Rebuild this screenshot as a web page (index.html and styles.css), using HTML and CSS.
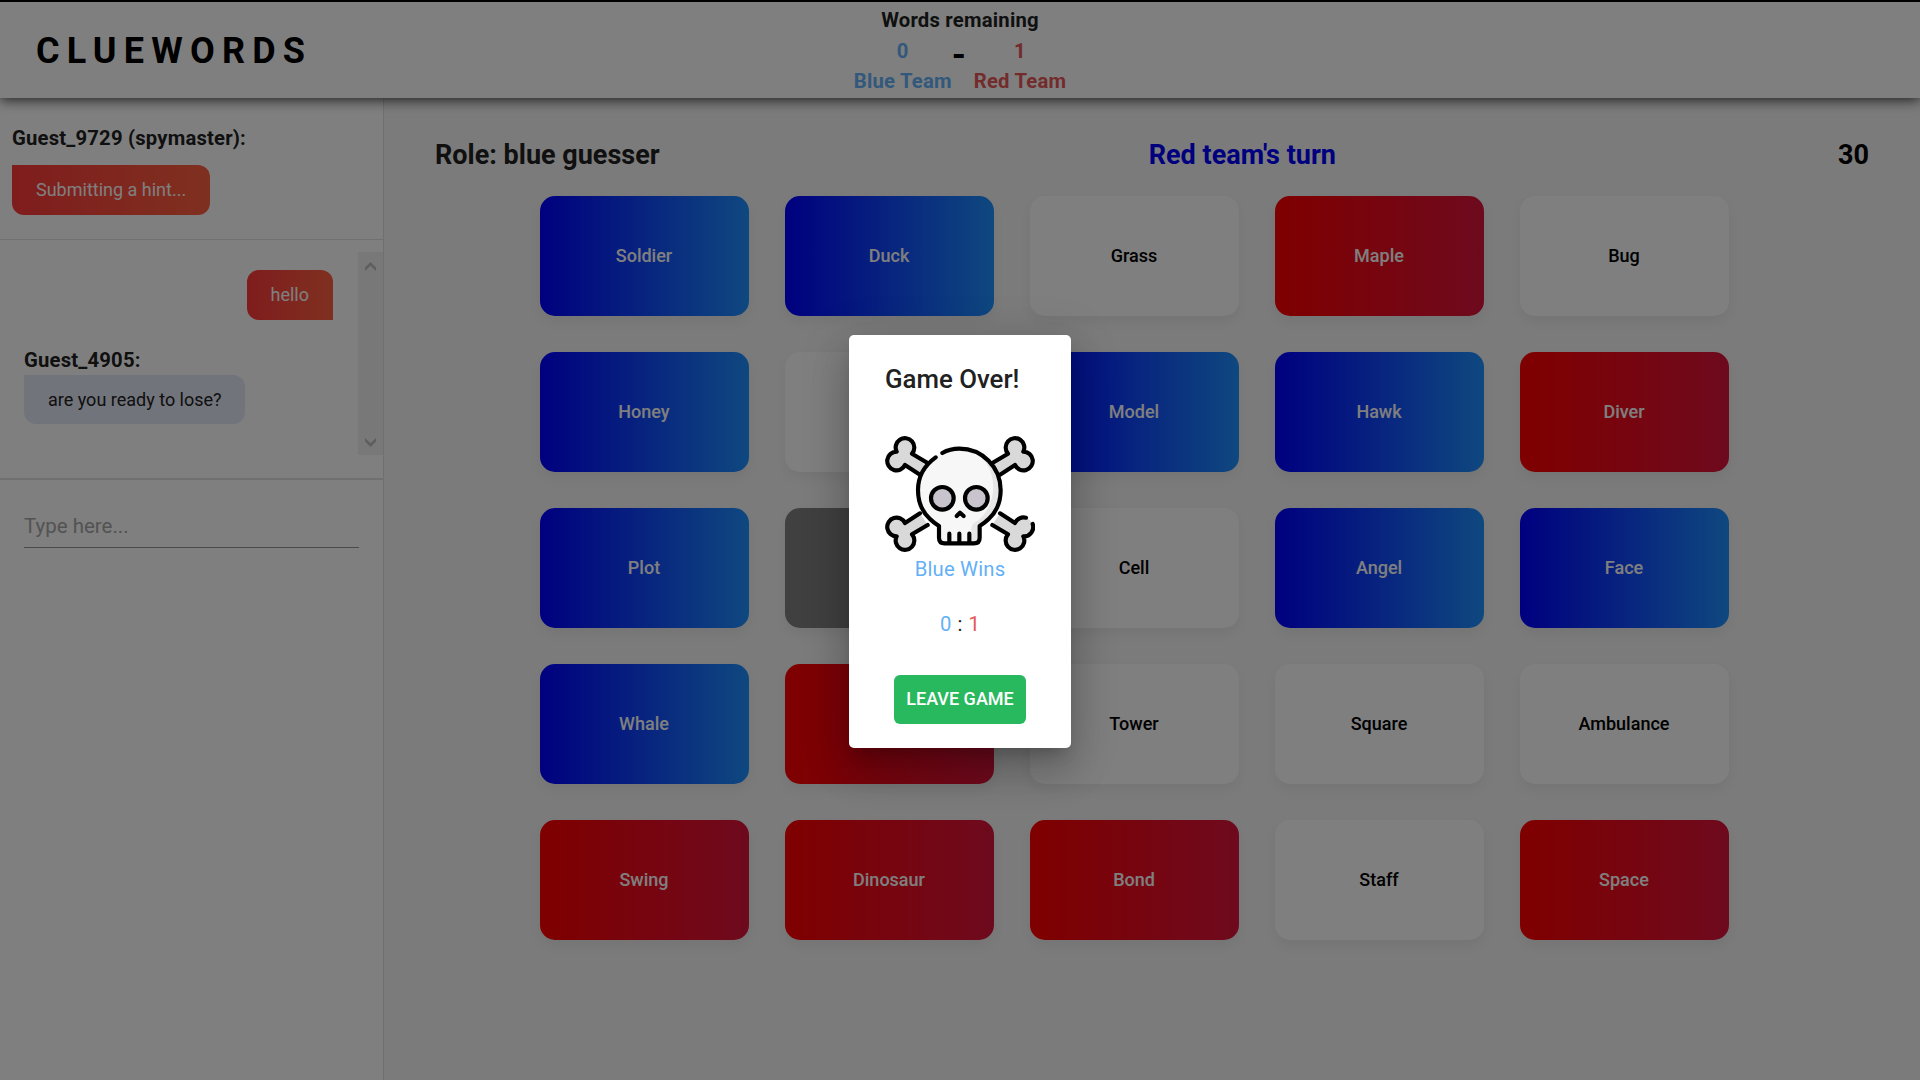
FILE: index.html
```html
<!DOCTYPE html>
<html lang="en">
<head>
<meta charset="utf-8">
<title>Cluewords</title>
<link rel="stylesheet" href="styles.css">
</head>
<body>
<header class="header">
  <h1 class="logo">CLUEWORDS</h1>
  <div class="score">
    <div class="score-title">Words remaining</div>
    <div class="score-row">
      <div class="team blue-text"><span>0</span><span>Blue Team</span></div>
      <div class="dash">-</div>
      <div class="team red-text"><span>1</span><span>Red Team</span></div>
    </div>
  </div>
  <div></div>
</header>
<div class="layout">
  <aside class="sidebar">
    <section class="hint">
      <div class="author">Guest_9729 (spymaster):</div>
      <div class="bubble warm hint-bubble">Submitting a hint...</div>
    </section>
    <section class="chat">
      <div class="messages">
        <div class="bubble warm mine">hello</div>
        <div class="author theirs-name">Guest_4905:</div>
        <div class="bubble theirs">are you ready to lose?</div>
      </div>
      <div class="scrollbar">
        <svg width="11" height="9" viewBox="0 0 11 9"><path d="M0 5.500 5.500 0 11 5.500V9L5.500 3.800 0 9z"/></svg>
        <svg width="11" height="9" viewBox="0 0 11 9"><path d="M0 3.500 5.500 9 11 3.500V0L5.500 5.200 0 0z"/></svg>
      </div>
    </section>
    <section class="compose"><div class="field">Type here...</div></section>
  </aside>
  <main class="main">
    <div class="status">
      <div class="role">Role: blue guesser</div>
      <div class="turn">Red team's turn</div>
      <div class="timer">30</div>
    </div>
    <div class="board">
      <div class="card blue">Soldier</div><div class="card blue">Duck</div><div class="card">Grass</div><div class="card red">Maple</div><div class="card">Bug</div>
      <div class="card blue">Honey</div><div class="card"></div><div class="card blue">Model</div><div class="card blue">Hawk</div><div class="card red">Diver</div>
      <div class="card blue">Plot</div><div class="card assassin"></div><div class="card">Cell</div><div class="card blue">Angel</div><div class="card blue">Face</div>
      <div class="card blue">Whale</div><div class="card red"></div><div class="card">Tower</div><div class="card">Square</div><div class="card">Ambulance</div>
      <div class="card red">Swing</div><div class="card red">Dinosaur</div><div class="card red">Bond</div><div class="card">Staff</div><div class="card red">Space</div>
    </div>
  </main>
</div>
<div class="overlay">
  <div class="dialog">
    <h2 class="dialog-title">Game Over!</h2>
    <svg class="skull" viewBox="135 333 450 348" fill="none" stroke="#000" stroke-width="12.500" stroke-linecap="round" stroke-linejoin="round">
      <g fill="#d9d9d9">
        <path d="M263 414 216 386A28 28 0 1 0 170 380A28 28 0 1 0 195 420L240 449"/>
        <path d="M457 414 504 386A28 28 0 1 1 550 380A28 28 0 1 1 525 420L480 449"/>
        <path d="M263 600 216 628A28 28 0 1 1 170 634A28 28 0 1 1 195 594L240 565"/>
        <path stroke="none" d="M457 600 504 628A28 28 0 1 0 550 634A28 28 0 1 0 525 594L480 565"/>
      </g>
      <path d="M457 600 504 628A28 28 0 1 0 550 634A28 28 0 0 0 578 597M558 578A28 28 0 0 0 525 594L480 565"/>
      <path fill="#f7f7f7" stroke="none" d="M358 371A124 124 0 0 0 234 495Q234 549 270 582L297 603V638Q297 655 314 655H402Q419 655 419 638V603L446 582Q482 549 482 495A124 124 0 0 0 358 371Z"/>
      <path fill="#e6e6e6" stroke="none" d="M385 375C478 405 486 545 400 596Q394 601 394 612V655H402Q419 655 419 638V603L446 582Q482 549 482 495A124 124 0 0 0 385 375Z"/>
      <path d="M287 397Q234 435 234 495Q234 549 270 582Q280 592 297 603V638Q297 655 314 655H402Q419 655 419 638V603Q436 592 446 582Q482 549 482 495A124 124 0 0 0 358 371Q330 371 307 384"/>
      <path d="M328 626V653M358 626V653M388 626V653"/>
      <circle cx="307" cy="520" r="34" fill="#c8c3cc"/>
      <circle cx="409" cy="520" r="34" fill="#c8c3cc"/>
      <path d="M350 573 360 563 371 573"/>
    </svg>
    <p class="winner blue-text">Blue Wins</p>
    <p class="result"><span class="blue-text">0</span> : <span class="red-text">1</span></p>
    <button class="leave">LEAVE GAME</button>
  </div>
</div>
</body>
</html>
```

FILE: styles.css
```css
* { box-sizing: border-box; }
body {
  margin: 0;
  height: 1080px;
  overflow: hidden;
  display: flex;
  flex-direction: column;
  border-top: 2px solid #000;
  font-family: Roboto, "Liberation Sans", sans-serif;
  font-size: 18px;
  color: #212121;
  background: #fff;
}
.blue-text { color: #64b0f6; }
.red-text { color: #e65656; }

.header {
  flex: none;
  height: 96px;
  display: grid;
  grid-template-columns: 1fr auto 1fr;
  background: #fff;
  box-shadow: 0 2px 12px rgba(0, 0, 0, 0.75);
  z-index: 1;
}
.logo {
  margin: 0;
  padding: 2px 0 0 36px;
  align-self: center;
  font-size: 36px;
  line-height: 42px;
  letter-spacing: 7.2px;
  color: #000;
}
.score {
  padding-top: 3px;
  font-size: 20.25px;
  line-height: 30px;
  letter-spacing: 0.22px;
  font-weight: 700;
  text-align: center;
}
.score-row { display: flex; justify-content: center; padding-top: 1px; }
.team { display: flex; flex-direction: column; }
.dash { width: 22px; padding-right: 8px; font-size: 36px; line-height: 39px; color: #000; }

.layout { flex: 1; display: flex; min-height: 0; }
.sidebar { width: 384px; flex: none; border-right: 1px solid #e0e0e0; }
.author { font-size: 20.25px; line-height: 30px; letter-spacing: 0.19px; font-weight: 700; }
.bubble { width: fit-content; padding: 0 24px; font-size: 18px; line-height: 49px; border-radius: 12px; }
.warm { color: #fff; line-height: 50px; background: linear-gradient(90deg, #ff3a3a, #ff6040); }
.hint { height: 142px; padding: 25px 12px 0; border-bottom: 1px solid #e0e0e0; }
.hint-bubble { margin-top: 12px; border-top-left-radius: 0; }
.chat { height: 240px; padding-top: 12px; display: flex; border-bottom: 2px solid #e0e0e0; }
.messages { flex: 1; padding: 18px 25px 0 24px; }
.mine { margin-left: auto; border-bottom-right-radius: 0; }
.theirs-name { margin-top: 25px; }
.theirs { padding-right: 23px; border-top-left-radius: 0; background: #e3e8f7; }
.scrollbar {
  width: 25px;
  height: 203px;
  padding: 10px 0 8px;
  display: flex;
  flex-direction: column;
  align-items: center;
  justify-content: space-between;
  background: #f0f0f0;
  fill: #bdbdbd;
}
.compose { padding: 28px 24px 0; }
.field { height: 40px; font-size: 20.5px; line-height: 36px; color: #a6a6a6; border-bottom: 1px solid #949494; }

.main { flex: 1; background: #f6f6f6; padding: 40px 51px 0; }
.status { display: flex; justify-content: space-between; font-size: 27px; line-height: 34px; font-weight: 700; }
.turn { margin-right: 13px; color: #00f; }
.timer { color: #000; }
.board {
  display: grid;
  grid-template-columns: repeat(5, 209px);
  grid-auto-rows: 120px;
  gap: 36px;
  margin: 24px 0 0 105px;
}
.card {
  display: flex;
  align-items: center;
  justify-content: center;
  padding: 0 1px 2px 0;
  border-radius: 15px;
  background: #fff;
  color: #000;
  font-size: 18px;
  font-weight: 500;
  box-shadow: 0 6px 12px rgba(0, 0, 0, 0.05);
}
.blue { color: #fff; background: linear-gradient(90deg, #00f, #1e90ff); }
.red { color: #fff; background: linear-gradient(90deg, #f00, #dc143c); }
.assassin { background: #808080; }

.overlay {
  position: absolute;
  inset: 2px 0 0;
  z-index: 2;
  display: flex;
  align-items: center;
  justify-content: center;
  background: rgba(0, 0, 0, 0.5);
}
.dialog {
  width: 222px;
  height: 413px;
  padding: 24px 36px;
  display: flex;
  flex-direction: column;
  align-items: center;
  border-radius: 5px;
  background: #fff;
  box-shadow: 0 11px 15px -7px rgba(0, 0, 0, .2), 0 24px 38px 3px rgba(0, 0, 0, .14), 0 9px 46px 8px rgba(0, 0, 0, .12);
}
.dialog-title { align-self: flex-start; margin: 0; font-size: 25.8px; line-height: 40px; font-weight: 500; }
.skull { flex: none; width: 150px; height: 116px; margin-top: 37px; }
.winner, .result { margin: 0; font-size: 20.25px; line-height: 30px; letter-spacing: 0.19px; }
.winner { margin-top: 2px; }
.result { margin-top: 25px; word-spacing: 0.7px; }
.leave {
  flex: none;
  width: 132px;
  height: 49px;
  margin: 36px 0 0;
  padding: 0 0 2px;
  border: 0;
  border-radius: 6px;
  background: #28b85e;
  color: #fff;
  font: 500 18px Roboto, sans-serif;
}
```
